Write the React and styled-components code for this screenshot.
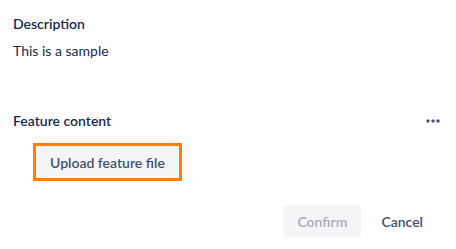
import styled, { createGlobalStyle } from "styled-components"

const GlobalStyle = createGlobalStyle`
  body {
    margin: 0;
    background: #fff;
    font-family: Lato, "Open Sans", sans-serif;
    color: #172B4D;
  }
`

const Page = styled.div`
  padding: 14px 15px 12px 13px;
`

const Label = styled.div`
  font-size: 14px;
  font-weight: 600;
  line-height: 20px;
  color: #172B4D;
`

const Text = styled.p`
  margin: 7px 0 0;
  font-size: 14px;
  line-height: 20px;
  color: #172B4D;
`

const FieldHeader = styled.div`
  display: flex;
  align-items: center;
  justify-content: space-between;
  margin-top: 50px;
`

const MoreButton = styled.button`
  width: 16px;
  height: 16px;
  padding: 0;
  border: none;
  background: none;
  color: #42526E;
  display: flex;
  align-items: center;
  justify-content: center;
`

const Highlight = styled.div`
  display: flex;
  width: fit-content;
  margin: 12px 0 0 20px;
  border: 3px solid #FF8000;
`

const Button = styled.button`
  height: 32px;
  padding: 0 14px;
  border: none;
  border-radius: 3px;
  font-family: inherit;
  font-size: 14px;
  font-weight: 600;
  background: ${({ $subtle }) => ($subtle ? "transparent" : "#F4F5F7")};
  color: ${({ disabled }) => (disabled ? "#A5ADBA" : "#42526E")};
`

const Footer = styled.div`
  display: flex;
  justify-content: flex-end;
  gap: 6px;
  margin-top: 24px;
  padding-right: 4px;
`

const App = () => {
  return (
    <Page>
      <GlobalStyle />
      <Label>Description</Label>
      <Text>This is a sample</Text>

      <FieldHeader>
        <Label>Feature content</Label>
        <MoreButton aria-label="More">
          <svg width="14" height="4" viewBox="0 0 14 4">
            <rect x="0.5" y="0.5" width="3" height="3" rx="0.8" fill="currentColor" />
            <rect x="5.5" y="0.5" width="3" height="3" rx="0.8" fill="currentColor" />
            <rect x="10.5" y="0.5" width="3" height="3" rx="0.8" fill="currentColor" />
          </svg>
        </MoreButton>
      </FieldHeader>
      <Highlight>
        <Button>Upload feature file</Button>
      </Highlight>

      <Footer>
        <Button disabled>Confirm</Button>
        <Button $subtle>Cancel</Button>
      </Footer>
    </Page>
  )
}

export default App
